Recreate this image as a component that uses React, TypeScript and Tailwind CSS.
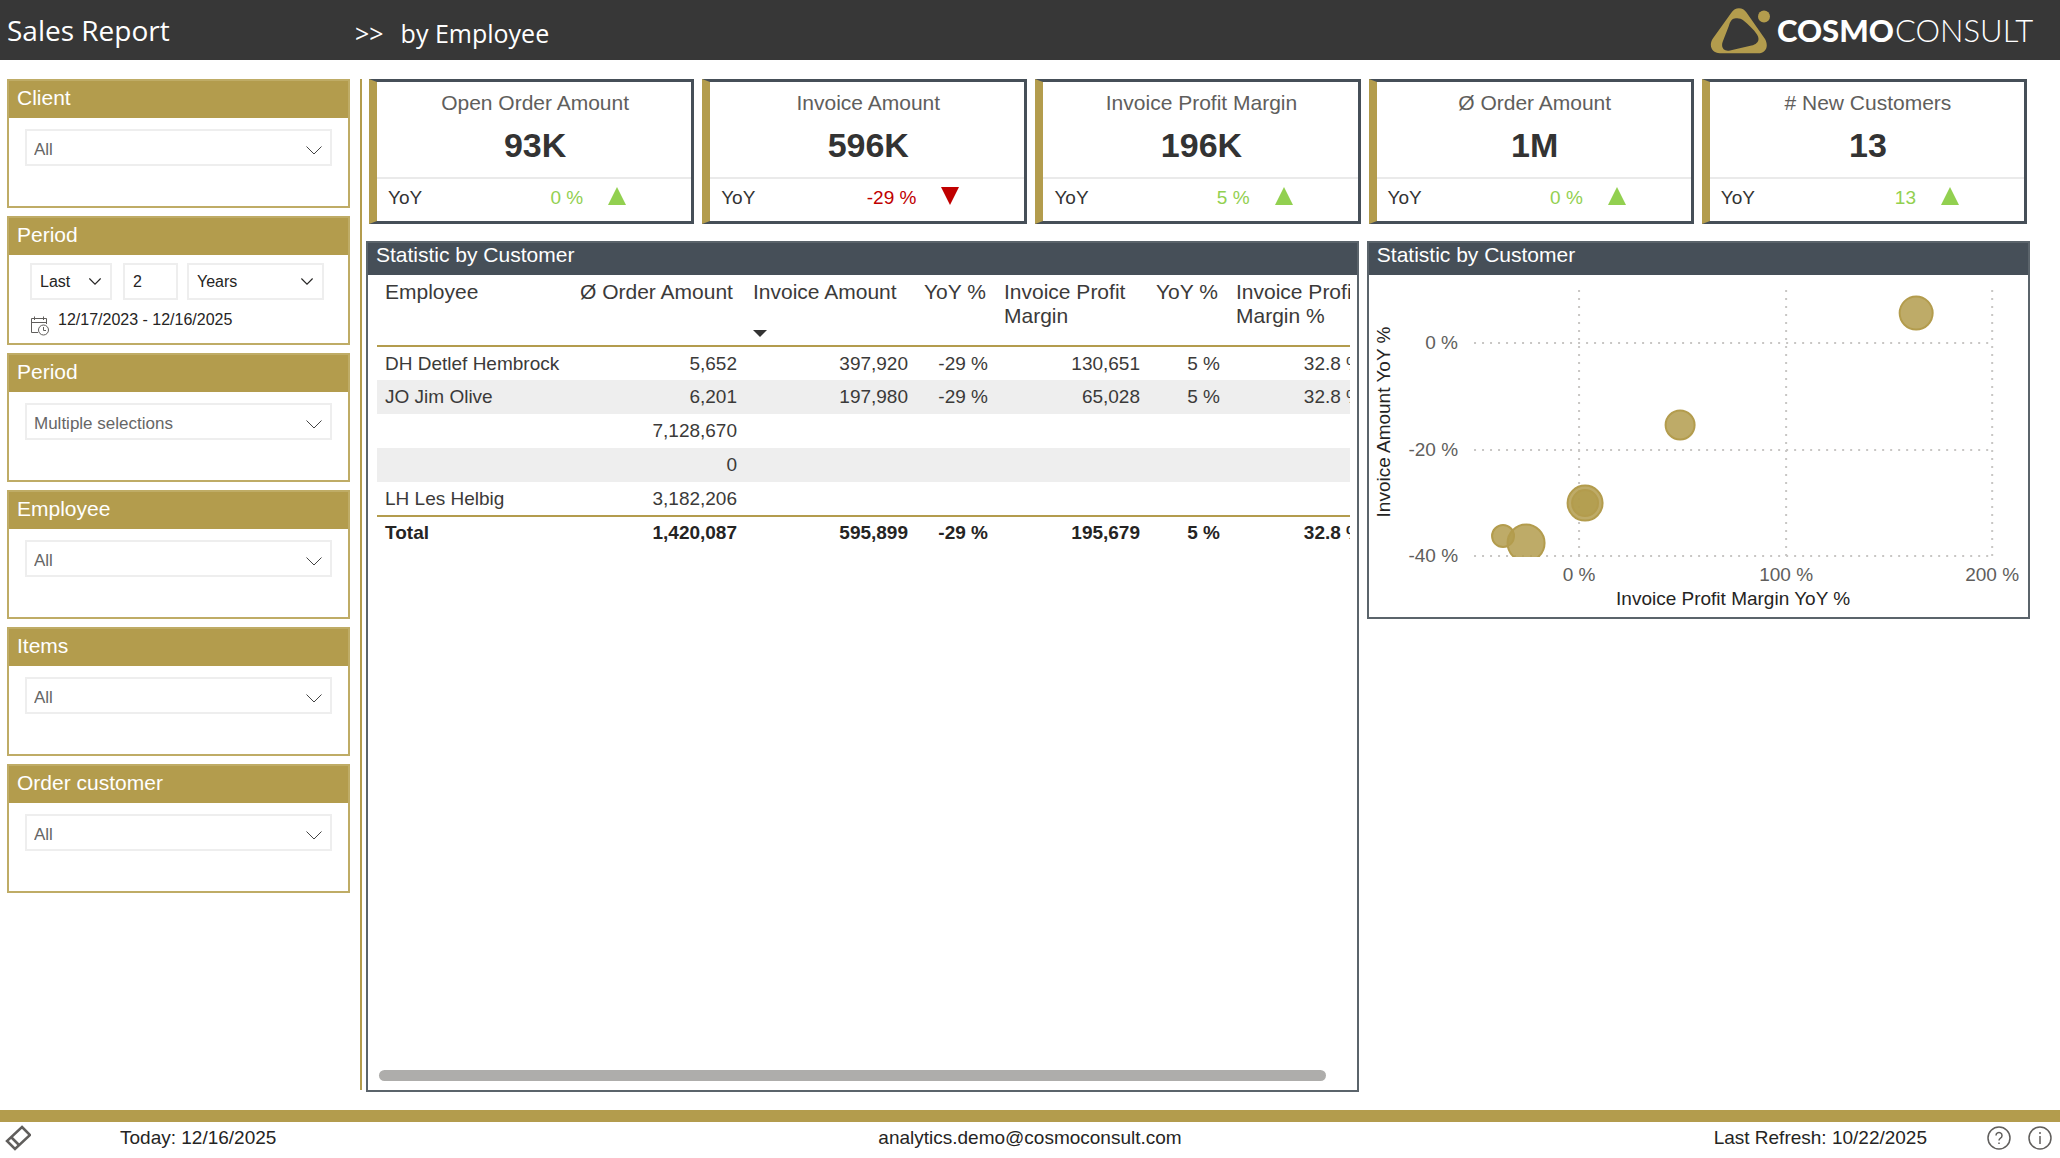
import type { ReactNode } from "react"

const font = "font-['Liberation_Sans',Arial,sans-serif]"

type Kpi = { title: string; value: string; yoy: string; up: boolean }

const kpis: Kpi[] = [
  { title: "Open Order Amount", value: "93K", yoy: "0 %", up: true },
  { title: "Invoice Amount", value: "596K", yoy: "-29 %", up: false },
  { title: "Invoice Profit Margin", value: "196K", yoy: "5 %", up: true },
  { title: "Ø Order Amount", value: "1M", yoy: "0 %", up: true },
  { title: "# New Customers", value: "13", yoy: "13", up: true },
]

const columns = [
  { label: "Employee", width: "w-[195px]" },
  { label: "Ø Order Amount", width: "w-[173px]" },
  { label: "Invoice Amount", width: "w-[171px]", sorted: true },
  { label: "YoY %", width: "w-[80px]" },
  { label: "Invoice Profit Margin", width: "w-[152px]" },
  { label: "YoY %", width: "w-[80px]" },
  { label: "Invoice Profit Margin %", width: "w-[143px]" },
]

const rows = [
  ["DH Detlef Hembrock", "5,652", "397,920", "-29 %", "130,651", "5 %", "32.8 %"],
  ["JO Jim Olive", "6,201", "197,980", "-29 %", "65,028", "5 %", "32.8 %"],
  ["", "7,128,670", "", "", "", "", ""],
  ["", "0", "", "", "", "", ""],
  ["LH Les Helbig", "3,182,206", "", "", "", "", ""],
]

const total = ["Total", "1,420,087", "595,899", "-29 %", "195,679", "5 %", "32.8 %"]

const bubbles = [
  { x: 547, y: 38, r: 16.5 },
  { x: 311, y: 150, r: 14.5 },
  { x: 216, y: 228, r: 17.5 },
  { x: 216, y: 228, r: 13 },
  { x: 134, y: 261, r: 11 },
  { x: 157, y: 268, r: 18.5 },
]

const xTicks = [
  { x: 210, label: "0 %" },
  { x: 417, label: "100 %" },
  { x: 623, label: "200 %" },
]

const yTicks = [
  { y: 68, label: "0 %" },
  { y: 175, label: "-20 %" },
  { y: 281, label: "-40 %" },
]

function Chevron({ className }: { className: string }) {
  return (
    <svg viewBox="0 0 16 9" fill="none" stroke="currentColor" className={className}>
      <path d="M0.5 0.5 8 8 15.5 0.5" />
    </svg>
  )
}

function Logo() {
  return (
    <svg viewBox="0 0 330 54" className="h-[54px] w-[330px]" role="img" aria-label="Cosmo Consult">
      <path
        fill="#b39c4d"
        fillRule="evenodd"
        d="M21.5 9.5C25 3.800 33 3.800 36.500 9.500L55 36C59 43 56 50.300 48 50.300H10C2 50.300-1.500 43 2.500 36ZM24.500 15.500C21.500 16 20 19 19 22.500L12.800 38.500C10.500 44.500 14 48.800 20 47.500L41.500 42.500C47.500 41 50.500 37 47 31.500C43.500 26 38 21.500 33.500 17.500C31 15.300 27.500 14.700 24.500 15.500Z"
      />
      <circle cx="54" cy="13.500" r="6" fill="#b39c4d" />
      <text x="67" y="39" fill="#fff" fontSize="31" fontWeight="900" fontFamily="Lato, sans-serif">
        COSMO
      </text>
      <text x="185" y="39" fill="#fff" fontSize="31" fontWeight="300" fontFamily="Lato, sans-serif">
        CONSULT
      </text>
    </svg>
  )
}

function Slicer({ title, children }: { title: string; children: ReactNode }) {
  return (
    <section className="h-[129px] border-2 border-[#bfac66] bg-white">
      <h2 className="h-[37px] bg-[#b39c4d] pl-2 text-[21px] leading-[34px] text-white">{title}</h2>
      {children}
    </section>
  )
}

function DropdownSlicer({ title, value }: { title: string; value: string }) {
  return (
    <Slicer title={title}>
      <div className="relative mx-4 mt-[11px]">
        <select
          aria-label={title}
          className="h-[37px] w-full appearance-none border-2 border-[#eee] bg-white pt-1 pl-[7px] text-[17px] text-[#666] outline-none"
        >
          <option>{value}</option>
        </select>
        <Chevron className="pointer-events-none absolute top-[17px] right-[10px] h-[9px] w-4 text-[#444]" />
      </div>
    </Slicer>
  )
}

function PeriodSlicer() {
  const box = "h-[37px] w-full appearance-none border-2 border-[#eee] bg-white pl-2 text-[16px] text-[#252423] outline-none"
  return (
    <Slicer title="Period">
      <div className="mt-2 flex pr-6 pl-[21px]">
        <div className="relative w-[82px]">
          <select aria-label="Direction" className={box}>
            <option>Last</option>
          </select>
          <Chevron className="pointer-events-none absolute top-[15px] right-[11px] h-[7px] w-3 stroke-[1.5] text-[#252423]" />
        </div>
        <div className="ml-[11px] w-[55px]">
          <input aria-label="Count" defaultValue="2" className={box} />
        </div>
        <div className="relative ml-[9px] flex-1">
          <select aria-label="Unit" className={box}>
            <option>Years</option>
          </select>
          <Chevron className="pointer-events-none absolute top-[15px] right-[11px] h-[7px] w-3 stroke-[1.5] text-[#252423]" />
        </div>
      </div>
      <div className="mt-2 flex gap-2 pl-[21px]">
        <svg viewBox="0 0 20 20" fill="none" stroke="#605e5c" className="mt-2 size-5">
          <path d="M8 16.500H1.500V2.500H16.500V8M1.500 6.500H16.500M4.500 0.500V4M13.500 0.500V4" />
          <circle cx="13.500" cy="14" r="5" />
          <path d="M13.500 11V14.500H16" />
        </svg>
        <span className="text-[16px] leading-6 text-[#252423]">12/17/2023 - 12/16/2025</span>
      </div>
    </Slicer>
  )
}

function KpiCard({ title, value, yoy, up }: Kpi) {
  return (
    <section className="flex h-[145px] flex-col border-[3px] border-l-8 border-[#464f58] border-l-[#b39c4d] bg-white">
      <div className="flex-1 border-b-2 border-[#eaeaea] pl-[2px] text-center">
        <h3 className="pt-[7px] text-[21px] leading-7 text-[#605e5c]">{title}</h3>
        <p className="pt-[6px] text-[34px] leading-[44px] font-bold text-[#333]">{value}</p>
      </div>
      <div className="flex h-[42px] items-center pr-[65px] pb-1 pl-[11px] text-[19px] text-[#333]">
        <span className="flex-1">YoY</span>
        <span className={up ? "text-[#92d050]" : "text-[#c00000]"}>{yoy}</span>
        <svg viewBox="0 0 18 18" className="mb-1 ml-[25px] size-[18px]">
          {up ? <path d="M9 0 18 18H0Z" fill="#92d050" /> : <path d="M0 0H18L9 18Z" fill="#c00000" />}
        </svg>
      </div>
    </section>
  )
}

function Panel({ className, children }: { className: string; children: ReactNode }) {
  return (
    <section className={`flex flex-col border-2 border-[#5b646b] bg-white ${className}`}>
      <h2 className="h-8 bg-[#464f58] pl-2 text-[21px] leading-6 text-white">Statistic by Customer</h2>
      {children}
    </section>
  )
}

function EmployeeTable() {
  return (
    <div className="flex flex-1 flex-col pr-[7px] pb-[9px] pl-[9px]">
      <div className="flex-1 overflow-hidden">
        <table className="w-[994px] table-fixed border-collapse text-[19px] text-[#3b3a39]">
          <thead>
            <tr className="h-[71px] border-b-2 border-[#b39c4d] align-top text-[21px] leading-6">
              {columns.map((c, i) => (
                <th key={i} className={`${c.width} px-2 pt-[5px] text-left font-normal`}>
                  {c.label}
                  {c.sorted && (
                    <svg viewBox="0 0 14 7" className="mt-[26px] h-[7px] w-[14px]" fill="#333">
                      <path d="M0 0H14L7 7Z" />
                    </svg>
                  )}
                </th>
              ))}
            </tr>
          </thead>
          <tbody>
            {rows.map((row, i) => (
              <tr key={i} className="h-[34px] even:bg-[#eee]">
                {row.map((cell, j) => (
                  <td key={j} className={j === 0 ? "px-2 leading-6" : "px-2 text-right leading-6"}>
                    {cell}
                  </td>
                ))}
              </tr>
            ))}
          </tbody>
          <tfoot>
            <tr className="h-8 border-t-2 border-[#b39c4d] font-bold text-[#252423]">
              {total.map((cell, j) => (
                <td key={j} className={j === 0 ? "px-2 leading-6" : "px-2 text-right leading-6"}>
                  {cell}
                </td>
              ))}
            </tr>
          </tfoot>
        </table>
      </div>
      <div className="mr-6 ml-[2px] h-[11px] rounded-full bg-[#aeadab]" />
    </div>
  )
}

function ScatterChart() {
  return (
    <svg viewBox="0 0 659 342" className="w-full text-[19px]" role="img" aria-label="Scatter chart">
      <clipPath id="plot">
        <rect x="100" y="0" width="559" height="282" />
      </clipPath>
      <g stroke="#c8c6c4" strokeWidth="2" strokeDasharray="2 6">
        {xTicks.map((t) => (
          <path key={t.x} d={`M${t.x} 15V284`} />
        ))}
        {yTicks.map((t) => (
          <path key={t.y} d={`M105 ${t.y}H624`} />
        ))}
      </g>
      <g fill="#605e5c">
        {xTicks.map((t) => (
          <text key={t.x} x={t.x} y="306" textAnchor="middle">
            {t.label}
          </text>
        ))}
        {yTicks.map((t) => (
          <text key={t.y} x="89" y={t.y + 6} textAnchor="end">
            {t.label}
          </text>
        ))}
      </g>
      <g fill="#252423" textAnchor="middle">
        <text x="364" y="330">
          Invoice Profit Margin YoY %
        </text>
        <text transform="translate(21 147) rotate(-90)">Invoice Amount YoY %</text>
      </g>
      <g clipPath="url(#plot)" fill="#b39c4d" fillOpacity="0.85" stroke="#b39c4d" strokeWidth="2">
        {bubbles.map((b, i) => (
          <circle key={i} cx={b.x} cy={b.y} r={b.r} />
        ))}
      </g>
    </svg>
  )
}

export default function App() {
  return (
    <div className={`flex min-h-screen flex-col bg-white ${font}`}>
      <header className="flex h-[60px] items-center bg-[#373737] pr-5 font-['Open_Sans','Noto_Sans',sans-serif] text-white">
        <h1 className="w-[355px] pl-[7px] text-[28px] leading-[58px]">Sales Report</h1>
        <p className="flex flex-1 gap-[17px] pt-2 text-[25px]">
          <span>&gt;&gt;</span>
          <span>by Employee</span>
        </p>
        <Logo />
      </header>

      <main className="flex flex-1 pt-[19px] pr-[30px] pb-[18px] pl-[7px]">
        <aside className="flex w-[343px] flex-col gap-2">
          <DropdownSlicer title="Client" value="All" />
          <PeriodSlicer />
          <DropdownSlicer title="Period" value="Multiple selections" />
          <DropdownSlicer title="Employee" value="All" />
          <DropdownSlicer title="Items" value="All" />
          <DropdownSlicer title="Order customer" value="All" />
        </aside>
        <div className="mr-1 mb-[2px] ml-[10px] w-[2px] bg-[#b39c4d]" />
        <div className="flex min-w-0 flex-1 flex-col gap-[17px]">
          <div className="grid grid-cols-5 gap-2 px-[3px]">
            {kpis.map((k) => (
              <KpiCard key={k.title} {...k} />
            ))}
          </div>
          <div className="flex flex-1 items-start gap-2">
            <Panel className="min-w-0 flex-[3] self-stretch">
              <EmployeeTable />
            </Panel>
            <Panel className="min-w-0 flex-[2]">
              <ScatterChart />
            </Panel>
          </div>
        </div>
      </main>

      <footer className="grid h-12 grid-cols-[1fr_auto_1fr] items-start border-t-[12px] border-[#b39c4d] text-[19px] leading-8 text-[#252423]">
        <div className="flex items-center">
          <button aria-label="Clear filters" className="mr-[89px] ml-[5px]">
            <svg viewBox="0 0 26 26" className="size-[26px]" fill="none" stroke="#605e5c" strokeWidth="2.5">
              <path d="M17 2 25 10 10 24 2 16Z" />
              <path d="M6 12 14 20" />
            </svg>
          </button>
          Today: 12/16/2025
        </div>
        <span>analytics.demo@cosmoconsult.com</span>
        <div className="flex items-center justify-end pr-2">
          Last Refresh: 10/22/2025
          <button aria-label="Help" className="ml-[60px]">
            <svg viewBox="0 0 24 24" className="size-6" fill="none" stroke="#605e5c" strokeWidth="1.5">
              <circle cx="12" cy="12" r="11" />
              <path d="M9 9.500a3 3 0 1 1 4.500 2.600C12.500 12.800 12 13.300 12 14.500M12 16.500V18" />
            </svg>
          </button>
          <button aria-label="Info" className="ml-[17px]">
            <svg viewBox="0 0 24 24" className="size-6" fill="none" stroke="#605e5c" strokeWidth="1.5">
              <circle cx="12" cy="12" r="11" />
              <path d="M12 10V18M12 6V8" />
            </svg>
          </button>
        </div>
      </footer>
    </div>
  )
}
